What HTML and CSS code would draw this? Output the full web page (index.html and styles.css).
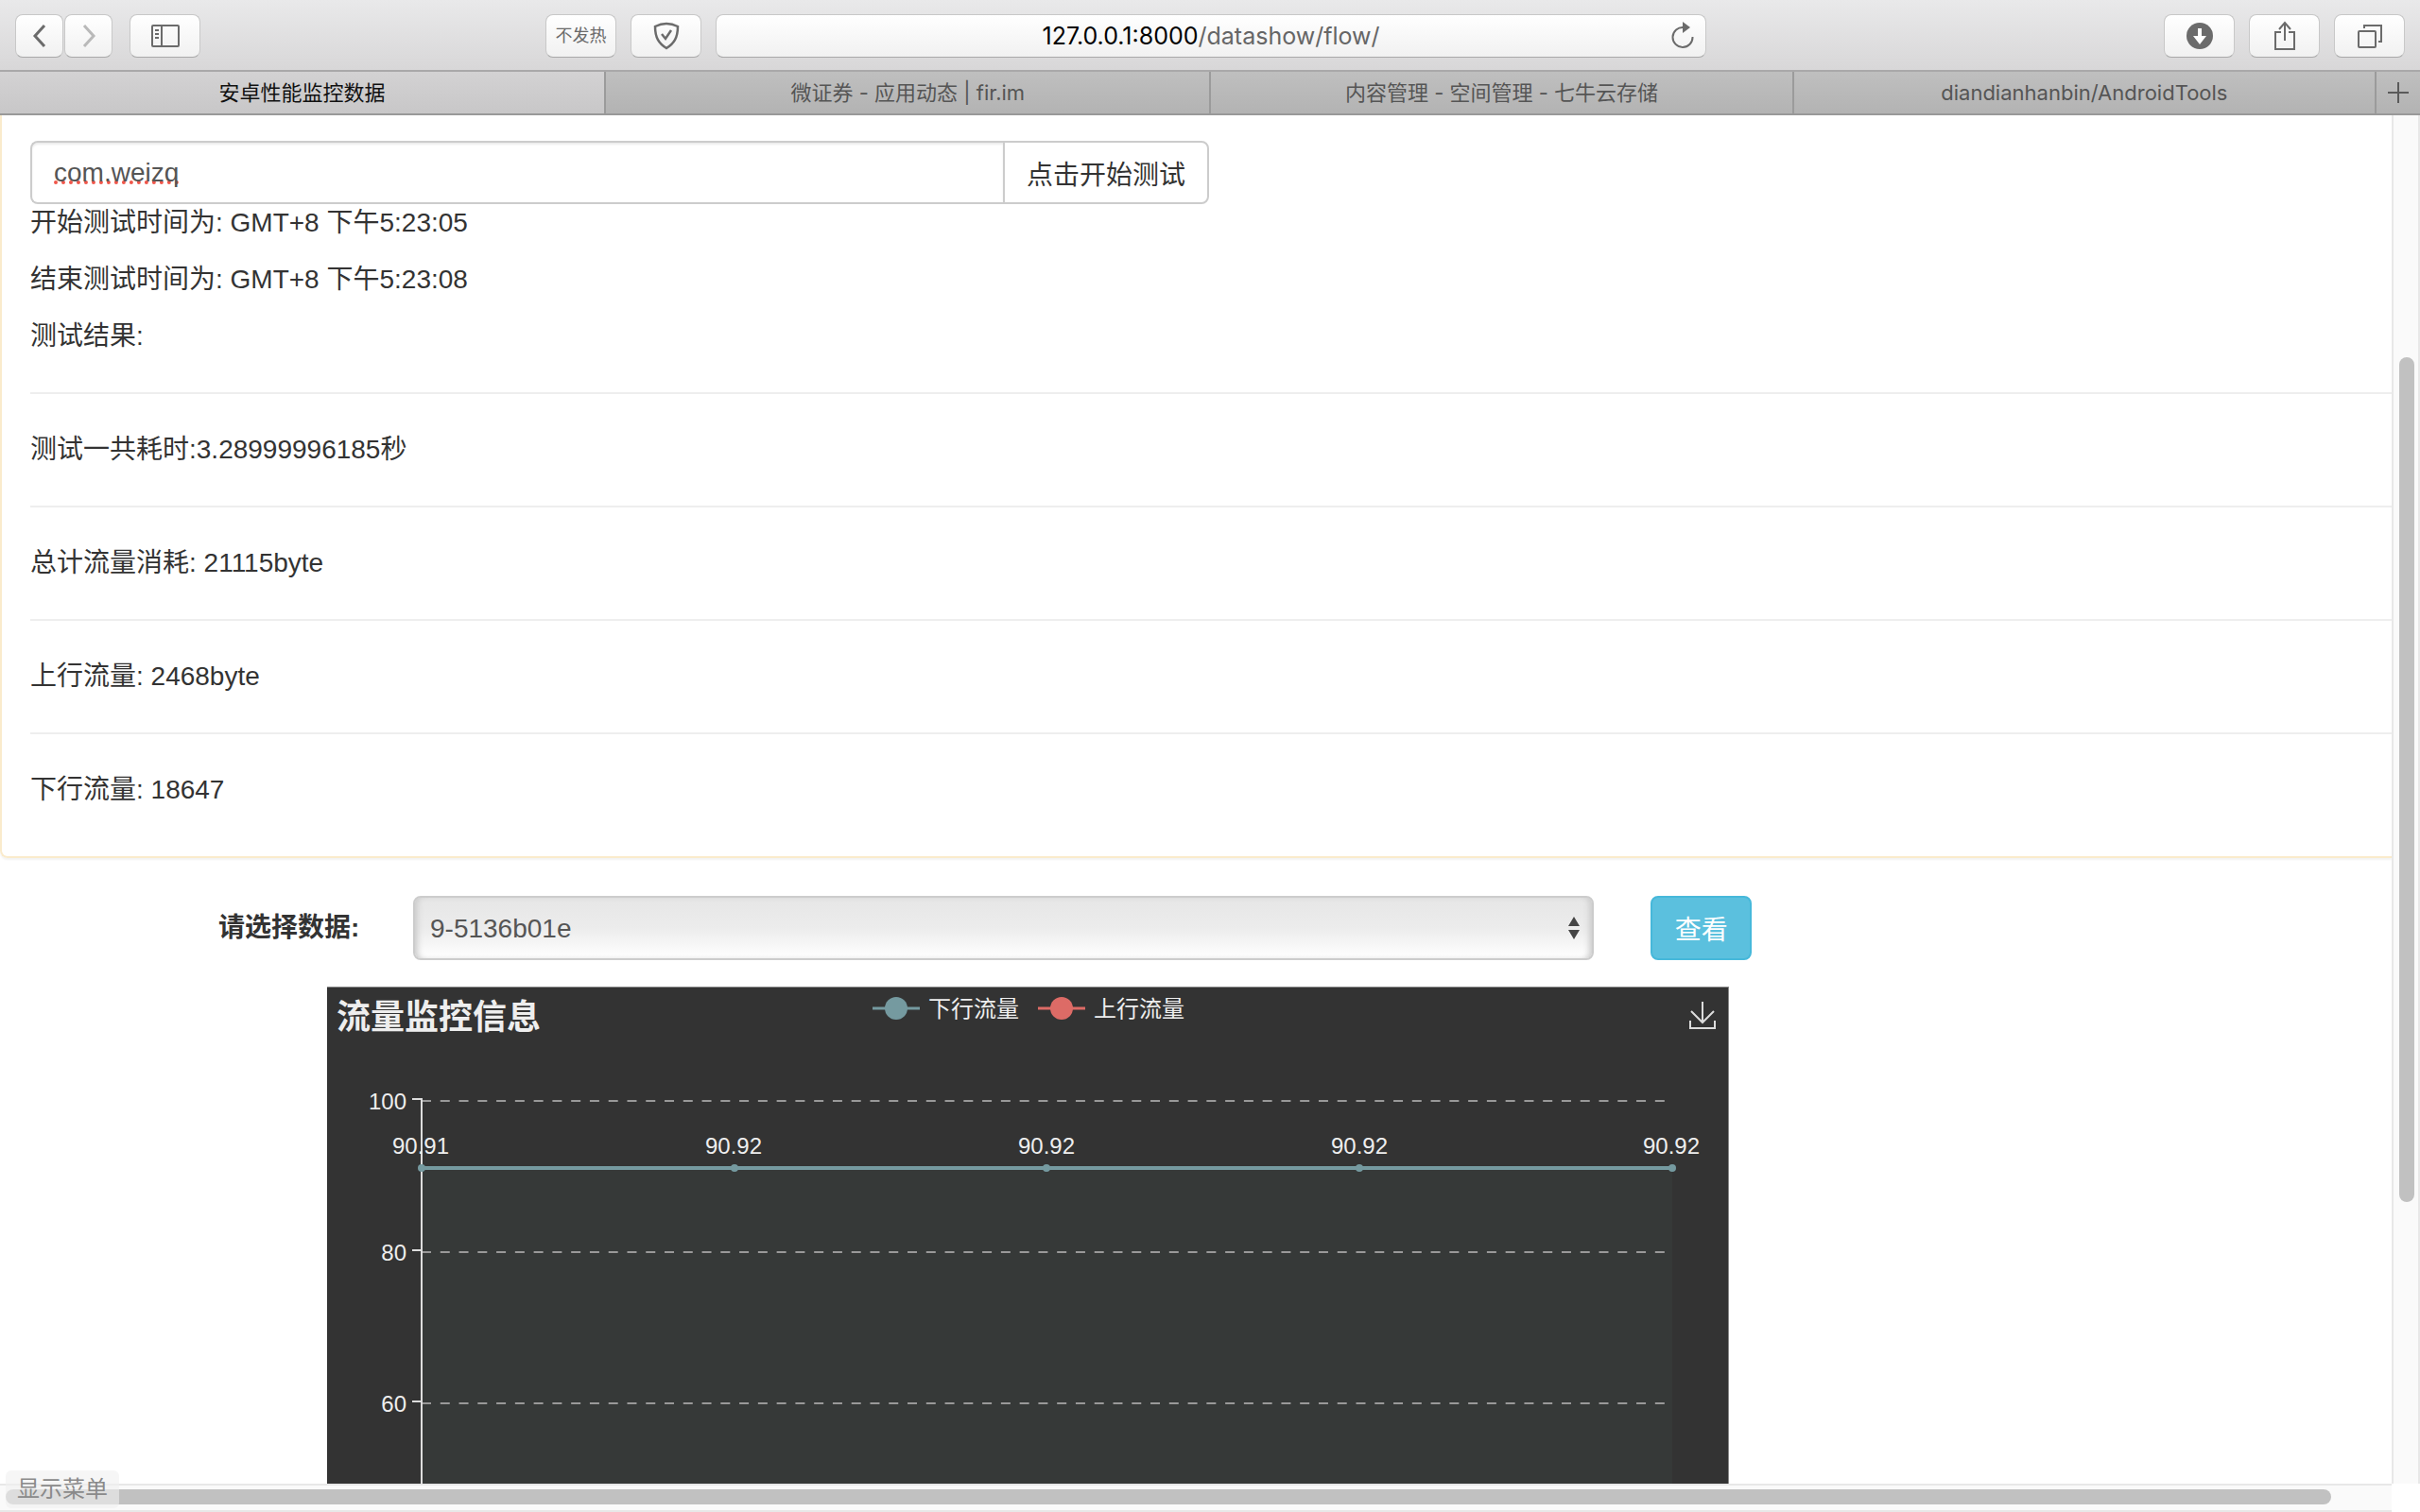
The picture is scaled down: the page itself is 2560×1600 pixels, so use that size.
FILE: index.html
```html
<!doctype html>
<html lang="zh-CN">
<head>
    <meta charset="UTF-8">
    <meta name="viewport" content="width=device-width, initial-scale=1.0">
    <title>安卓性能监控数据</title>
    <link rel="stylesheet" href="styles.css">
</head>
<body>
    <div class="toolbar">
        <div class="group nav">
            <button class="btn-nav" aria-label="后退">
                <svg width="16" height="26" viewBox="0 0 16 26"><path d="M13 2L3 13l10 11" fill="none" stroke="#6b6b6b" stroke-width="3"/></svg>
            </button>
            <button class="btn-nav" aria-label="前进">
                <svg width="16" height="26" viewBox="0 0 16 26"><path d="M3 2l10 11L3 24" fill="none" stroke="#b9b9b9" stroke-width="3"/></svg>
            </button>
        </div>
        <button class="btn-tool" aria-label="边栏">
            <svg width="32" height="26" viewBox="0 0 32 26" fill="none" stroke="#6b6b6b" stroke-width="2">
                <rect x="2" y="2" width="28" height="22" rx="1"/>
                <path d="M12 2v22M5 7h4M5 11h4M5 15h4"/>
            </svg>
        </button>
        <div class="group center">
            <button class="btn-tool btn-text">不发热</button>
            <button class="btn-tool" aria-label="安全">
                <svg width="28" height="30" viewBox="0 0 28 30" fill="none" stroke="#6b6b6b">
                    <path d="M14 2c4 0 8 1 12 3 0 12-4 18-12 23C6 23 2 17 2 5c4-2 8-3 12-3z" stroke-width="2.5"/>
                    <path d="M9 13l4 5 6-9" stroke-width="2.5"/>
                </svg>
            </button>
            <div class="address">
                <span class="url"><b>127.0.0.1:8000</b>/datashow/flow/</span>
                <button class="reload" aria-label="重新载入">
                    <svg width="26" height="30" viewBox="0 0 26 30">
                        <path d="M14 6A10.500 10.500 0 1 0 23.500 16" fill="none" stroke="#6b6b6b" stroke-width="2"/>
                        <path d="M13 0l8 6-8 6z" fill="#6b6b6b"/>
                    </svg>
                </button>
            </div>
        </div>
        <div class="group right">
            <button class="btn-tool" aria-label="下载">
                <svg width="28" height="28" viewBox="0 0 28 28"><circle cx="14" cy="14" r="14" fill="#6b6b6b"/><path d="M12 6h4v8h5l-7 9-7-9h5z" fill="#fff"/></svg>
            </button>
            <button class="btn-tool" aria-label="共享">
                <svg width="26" height="32" viewBox="0 0 26 32" fill="none" stroke="#6b6b6b" stroke-width="2"><path d="M9 12H3v18h20V12h-6M13 21V3M7 9l6-7 6 7"/></svg>
            </button>
            <button class="btn-tool" aria-label="标签页">
                <svg width="28" height="28" viewBox="0 0 28 28" fill="none" stroke="#6b6b6b" stroke-width="2"><rect x="2" y="9" width="18" height="17" rx="1"/><path d="M8 6V3h18v17h-3"/></svg>
            </button>
        </div>
    </div>
    <div class="tabs">
        <div class="tab on">安卓性能监控数据</div>
        <div class="tab">微证券 - 应用动态 | fir.im</div>
        <div class="tab">内容管理 - 空间管理 - 七牛云存储</div>
        <div class="tab">diandianhanbin/AndroidTools</div>
        <button class="add" aria-label="新建标签页">
            <svg width="24" height="24" viewBox="0 0 24 24"><path d="M12 1v22M1 12h22" stroke="#5a5a5a" stroke-width="2"/></svg>
        </button>
    </div>
    <div class="view">
        <div class="page">
            <div class="panel">
                <p>请输入要测试的应用包名后点击按钮, 开始测试流量</p>
                <div class="input-group">
                    <input type="text" class="pkg" value="com.weizq" aria-label="包名" spellcheck="false">
                    <button class="start">点击开始测试</button>
                </div>
                <p>开始测试时间为: GMT+8 下午5:23:05</p>
                <p>结束测试时间为: GMT+8 下午5:23:08</p>
                <p>测试结果:</p>
                <hr>
                <p>测试一共耗时:3.28999996185秒</p>
                <hr>
                <p>总计流量消耗: 21115byte</p>
                <hr>
                <p>上行流量: 2468byte</p>
                <hr>
                <p>下行流量: 18647</p>
            </div>
            <form class="choose">
                <label for="data">请选择数据:</label>
                <div class="select">
                    <select id="data">
                        <option>9-5136b01e</option>
                    </select>
                    <svg width="14" height="26" viewBox="0 0 14 26"><path d="M7 1l6 10H1zM7 25l6-10H1z" fill="#444"/></svg>
                </div>
                <button type="button" class="look">查看</button>
            </form>
            <div class="chart">
                <svg width="1482" height="800" viewBox="0 0 1482 800">
                    <rect class="area" x="100" y="192" width="1323" height="608"/>
                    <g class="split">
                        <path d="M100 120H1415M100 280H1415M100 440H1415M100 600H1415"/>
                    </g>
                    <path class="axis" d="M90 118h10M90 278h10M90 438h10M90 598h10M100 117V800"/>
                    <g class="num end">
                        <text x="84" y="129">100</text>
                        <text x="84" y="289">80</text>
                        <text x="84" y="449">60</text>
                        <text x="84" y="609">40</text>
                    </g>
                    <path class="line" d="M100 191H1423"/>
                    <g class="dots">
                        <circle cx="100" cy="191" r="4"/>
                        <circle cx="431" cy="191" r="4"/>
                        <circle cx="761" cy="191" r="4"/>
                        <circle cx="1092" cy="191" r="4"/>
                        <circle cx="1423" cy="191" r="4"/>
                    </g>
                    <g class="num mid">
                        <text x="99" y="176">90.91</text>
                        <text x="430" y="176">90.92</text>
                        <text x="761" y="176">90.92</text>
                        <text x="1092" y="176">90.92</text>
                        <text x="1422" y="176">90.92</text>
                    </g>
                    <text class="title" x="10" y="44">流量监控信息</text>
                    <g class="legend">
                        <path d="M577 22h50" stroke="#759aa0"/>
                        <circle cx="602" cy="22" r="12" fill="#759aa0"/>
                        <text x="636" y="31">下行流量</text>
                        <path d="M752 22h50" stroke="#dd6b66"/>
                        <circle cx="777" cy="22" r="12" fill="#dd6b66"/>
                        <text x="811" y="31">上行流量</text>
                    </g>
                    <path class="save" d="M1455 15v22M1443 25l12 12 12-12M1442 35v8h26v-8"/>
                </svg>
            </div>
        </div>
        <div class="scroll-y"><div class="thumb"></div></div>
        <div class="scroll-x"><div class="thumb"></div></div>
        <div class="corner"></div>
        <div class="status">显示菜单</div>
    </div>
</body>
</html>
```
FILE: styles.css
```css
*{
    padding:0;
    margin:0;
    box-sizing: border-box;
}
body{
    display: flex;
    flex-direction: column;
    height:100vh;
    overflow: hidden;
    background:#fff;
    color:#333;
    font-family: "Liberation Sans", "Noto Sans CJK SC", sans-serif;
    font-size: 28px;
    line-height: 40px;
}
button,input,select{
    font-family: inherit;
    font-size: inherit;
    color: inherit;
}
svg{
    display: block;
}

/* 工具栏 */
.toolbar{
    display: flex;
    align-items: center;
    height:76px;
    padding:2px 16px 0;
    background:linear-gradient(#e9e9ea,#d8d7d8);
    border-bottom:2px solid #a9a8a9;
}
.toolbar .group{
    display: flex;
}
.toolbar button{
    display: flex;
    align-items: center;
    justify-content: center;
    height:46px;
    border:1px solid #c8c8c8;
    border-bottom-color:#a8a8a8;
    border-radius: 8px;
    background:linear-gradient(#fff,#f1f1f1);
}
.nav{
    gap:1px;
    margin-right:18px;
}
.toolbar .btn-nav{
    width:51px;
}
.toolbar .btn-tool{
    width:75px;
}
.toolbar .btn-text{
    font-size: 18px;
    line-height: 30px;
    color:#6b6b6b;
    white-space: nowrap;
}
.center{
    flex:1;
    gap:15px;
    margin-left:365px;
    margin-right:484px;
}
.right{
    gap:15px;
}
.address{
    flex:1;
    display: flex;
    align-items: center;
    height:46px;
    padding:0 6px;
    border:1px solid #c8c8c8;
    border-bottom-color:#a8a8a8;
    border-radius: 8px;
    background:linear-gradient(#fff,#f1f1f1);
}
.url{
    flex:1;
    padding-left:36px;
    text-align: center;
    font-family: Inter, sans-serif;
    font-size: 25px;
    color:#666;
}
.url b{
    font-weight: normal;
    color:#000;
}
.toolbar .reload{
    width:36px;
    height:36px;
    border:0;
    background:none;
}

/* 标签页 */
.tabs{
    display: flex;
    height:46px;
    border-bottom:2px solid #999;
    background:linear-gradient(#bfbfbf,#b3b3b3);
    font-family: Inter, "Noto Sans CJK SC", sans-serif;
    font-size: 22px;
    line-height: 44px;
    color:#555;
}
.tab{
    flex:616 1 0;
    text-align: center;
    border-right:2px solid #9b9b9b;
    white-space: nowrap;
}
.tab.on{
    flex-grow:641;
    color:#111;
    background:linear-gradient(#d3d2d3,#c8c7c8);
}
.tab:nth-child(2){
    flex-grow:640;
}
.add{
    display: flex;
    align-items: center;
    justify-content: center;
    width:46px;
    border:0;
    background:none;
}

/* 页面内容 */
.view{
    flex:1;
    display: grid;
    grid-template-columns: minmax(0,1fr) 30px;
    grid-template-rows: minmax(0,1fr) 30px;
    position: relative;
    overflow: hidden;
}
.page{
    overflow: hidden;
}
.panel{
    margin-top:-63px;
    padding:28px 0 30px 30px;
    border:2px solid #faebcc;
    border-right:0;
    border-radius: 8px 0 0 8px;
    box-shadow: 0 2px 2px rgba(0,0,0,.05);
}
.panel p{
    margin-bottom:20px;
}
hr{
    margin:39px 0;
    border:0;
    border-top:2px solid #eee;
}
.input-group{
    display: flex;
    width:50%;
    max-width:1247px;
    height:67px;
}
.pkg{
    flex:1;
    min-width:0;
    padding:0 23px;
    border:2px solid #ccc;
    border-right:0;
    border-radius: 8px 0 0 8px;
    box-shadow: inset 0 2px 2px rgba(0,0,0,.075);
    color:#555;
    text-decoration: underline dotted #f0564a 4px;
    text-decoration-skip-ink: none;
    text-underline-offset: 0;
}
.start{
    padding:0 23px;
    border:2px solid #ccc;
    border-radius: 0 8px 8px 0;
    background:#fff;
}
.choose{
    display: flex;
    align-items: center;
    width:64%;
    margin:40px 0 28px 231px;
}
.choose label{
    width:206px;
    font-weight: bold;
}
.select{
    position: relative;
    flex:1;
    height:68px;
}
.select select{
    width:100%;
    height:100%;
    padding:0 16px;
    appearance: none;
    border:2px solid #ccc;
    border-radius: 8px;
    background:linear-gradient(#e6e6e6,#ececec 50%,#fff);
    box-shadow: inset 6px 0 6px -3px #ccc, inset -6px 0 6px -3px #ccc;
    color:#555;
}
.select svg{
    position: absolute;
    right:14px;
    top:21px;
    pointer-events: none;
}
.look{
    width:107px;
    height:68px;
    margin-left:60px;
    margin-right:-3px;
    border:2px solid #46b8da;
    border-radius: 8px;
    background:#5bc0de;
}
.choose .look{
    color:#fff;
}

/* 图表 */
.chart{
    width:1483px;
    margin-left:346px;
    border-top:1px solid #888;
    border-right:1px solid #888;
    background:#333;
}
.chart text{
    font-size: 24px;
    fill:#eee;
}
.chart .title{
    font-size: 36px;
    font-weight: bold;
}
.area{
    fill:#363938;
}
.split path{
    fill:none;
    stroke:#999;
    stroke-width:2;
    stroke-dasharray:10 9.770;
}
.axis{
    fill:none;
    stroke:#ddd;
    stroke-width:2;
}
.line{
    stroke:#759aa0;
    stroke-width:4;
}
.dots circle{
    fill:#759aa0;
}
.legend path{
    stroke-width:3;
}
.end{
    text-anchor: end;
}
.mid{
    text-anchor: middle;
}
.save{
    fill:none;
    stroke:#ddd;
    stroke-width:2;
}

/* 滚动条 */
.scroll-y{
    padding:256px 4px 0 6px;
    border-left:2px solid #e8e8e8;
    border-right:2px solid #e8e8e8;
    background:#fafafa;
}
.scroll-x{
    padding:4px 64px 0 6px;
    border-top:2px solid #e8e8e8;
    border-bottom:2px solid #e8e8e8;
    background:#fafafa;
}
.thumb{
    height:16px;
    border-radius: 8px;
    background:#c1c1c1;
}
.scroll-y .thumb{
    height:75%;
}
.status{
    position: absolute;
    left:6px;
    bottom:4px;
    padding:0 12px;
    border-radius: 6px;
    background:rgba(240,240,240,.6);
    color:#8a8a8a;
    font-size: 24px;
    line-height: 40px;
}
```
